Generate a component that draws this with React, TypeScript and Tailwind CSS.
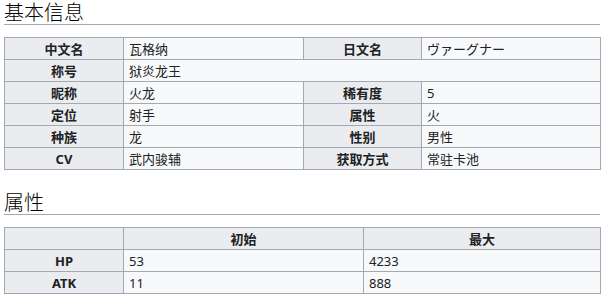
const th = "h-[22px] p-0 px-[5px] border border-[#a2a9b1] bg-[#eaecf0] text-center font-bold";
const td = "h-[22px] p-0 px-[5px] border border-[#a2a9b1] bg-[#f8f9fa] text-left";

const SectionTitle = ({ children, first }: { children: React.ReactNode; first?: boolean }) => (
  <h2
    className={`${first ? "" : "mt-[21px]"} h-[24px] border-b border-[#a2a9b1] text-[20px] leading-[23px] font-light text-black`}
  >
    {children}
  </h2>
);

export default function App() {
  const info = [
    ["中文名", "瓦格纳", "日文名", "ヴァーグナー"],
    ["称号", "狱炎龙王"],
    ["昵称", "火龙", "稀有度", "5"],
    ["定位", "射手", "属性", "火"],
    ["种族", "龙", "性别", "男性"],
    ["CV", "武内骏辅", "获取方式", "常驻卡池"],
  ];

  const stats = [
    ["HP", "53", "4233"],
    ["ATK", "11", "888"],
  ];

  return (
    <div
      className="w-[606px] bg-white pl-[4px] pt-[1px] text-[#202122]"
      style={{ fontFamily: '"Noto Sans", "Noto Sans CJK SC", sans-serif' }}
    >
      <div className="w-[596px]">
        <SectionTitle first>基本信息</SectionTitle>

        <table className="mt-[12px] w-[596px] table-fixed border-collapse border border-[#a2a9b1] text-[13px] leading-[20px]">
          <colgroup>
            <col className="w-[119px]" />
            <col className="w-[180px]" />
            <col className="w-[118px]" />
            <col className="w-[179px]" />
          </colgroup>
          <tbody>
            {info.map((row) => (
              <tr key={row[0]}>
                <th className={th}>{row[0]}</th>
                {row.length === 2 ? (
                  <td className={td} colSpan={3}>{row[1]}</td>
                ) : (
                  <>
                    <td className={td}>{row[1]}</td>
                    <th className={th}>{row[2]}</th>
                    <td className={td}>{row[3]}</td>
                  </>
                )}
              </tr>
            ))}
          </tbody>
        </table>

        <SectionTitle>属性</SectionTitle>

        <table className="mt-[12px] w-[596px] table-fixed border-collapse border border-[#a2a9b1] text-[13px] leading-[20px]">
          <colgroup>
            <col className="w-[119px]" />
            <col className="w-[240px]" />
            <col className="w-[237px]" />
          </colgroup>
          <tbody>
            <tr>
              <th className={th}></th>
              <th className={th}>初始</th>
              <th className={th}>最大</th>
            </tr>
            {stats.map((row) => (
              <tr key={row[0]}>
                <th className={th}>{row[0]}</th>
                <td className={td}>{row[1]}</td>
                <td className={td}>{row[2]}</td>
              </tr>
            ))}
          </tbody>
        </table>
      </div>
    </div>
  );
}
